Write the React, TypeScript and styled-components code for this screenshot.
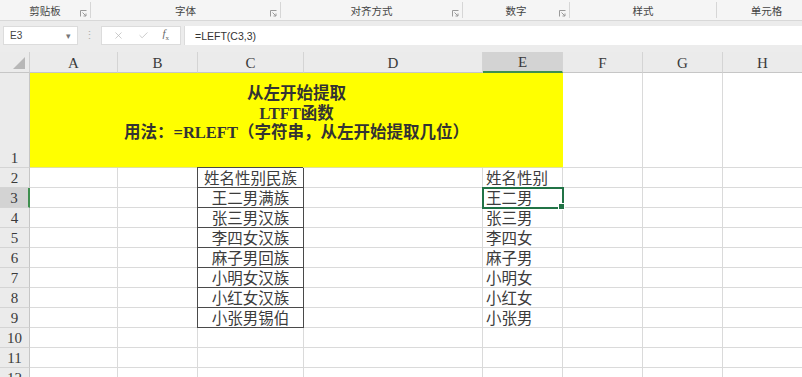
import styled, { createGlobalStyle } from 'styled-components';
import { X, Check } from 'lucide-react';

const GlobalStyle = createGlobalStyle`
  html, body {
    margin: 0;
    padding: 0;
    width: 802px;
    height: 377px;
    overflow: hidden;
    background: #ffffff;
    font-family: "Liberation Sans", "Noto Sans CJK SC", sans-serif;
  }
`;

const groups = [
  { label: '剪贴板', width: 91, launcher: true },
  { label: '字体', width: 190, launcher: true },
  { label: '对齐方式', width: 182, launcher: true },
  { label: '数字', width: 107, launcher: true },
  { label: '样式', width: 147, launcher: false },
  { label: '单元格', width: 100, launcher: false },
];

const columns = ['A', 'B', 'C', 'D', 'E', 'F', 'G', 'H'];

const nameList = ['姓名性别民族', '王二男满族', '张三男汉族', '李四女汉族', '麻子男回族', '小明女汉族', '小红女汉族', '小张男锡伯'];
const shortList = ['姓名性别', '王二男', '张三男', '李四女', '麻子男', '小明女', '小红女', '小张男'];

const Launcher = () => (
  <svg width="7" height="7" viewBox="0 0 7 7">
    <path d="M0.5 6.5V0.5H6.5" fill="none" stroke="#9a9a9a" strokeWidth="1" />
    <path d="M2.5 2.5L6 6M6 3.5V6H3.5" fill="none" stroke="#9a9a9a" strokeWidth="1" />
  </svg>
);

export default function App() {
  const rows = Array.from({ length: 11 }, (_, i) => i + 2);

  return (
    <Page>
      <GlobalStyle />
      <Ribbon>
        {groups.map((g) => (
          <Group key={g.label} $width={g.width}>
            <GroupLabel>{g.label}</GroupLabel>
            {g.launcher && (
              <LauncherSlot>
                <Launcher />
              </LauncherSlot>
            )}
          </Group>
        ))}
      </Ribbon>

      <FormulaBar>
        <NameBox>
          <span>E3</span>
          <Caret>▾</Caret>
        </NameBox>
        <Dots>⋮</Dots>
        <ActionBox>
          <X size={11} color="#b4b4b4" strokeWidth={1.5} />
          <Check size={11} color="#b4b4b4" strokeWidth={1.5} />
          <Fx>
            <i>f</i>
            <sub>x</sub>
          </Fx>
        </ActionBox>
        <FormulaInput>=LEFT(C3,3)</FormulaInput>
      </FormulaBar>

      <Sheet>
        <Corner>
          <svg width="12" height="12" viewBox="0 0 12 12">
            <path d="M12 0V12H0Z" fill="#b7b7b7" />
          </svg>
        </Corner>
        {columns.map((c) => (
          <ColHeader key={c} $active={c === 'E'}>
            {c}
          </ColHeader>
        ))}

        <RowHeader $tall>1</RowHeader>
        <TitleCell>
          <div>从左开始提取</div>
          <div>LTFT函数</div>
          <div>用法：=RLEFT（字符串，从左开始提取几位）</div>
        </TitleCell>
        <Cell />
        <Cell />
        <Cell />

        {rows.map((r) => {
          const idx = r - 2;
          const inTable = idx < nameList.length;
          return [
            <RowHeader key={`h${r}`} $active={r === 3}>
              {r}
            </RowHeader>,
            <Cell key={`a${r}`} />,
            <Cell key={`b${r}`} />,
            <Cell key={`c${r}`} $boxed={inTable} $boxTop={r === 2} $align="center">
              {inTable ? nameList[idx] : ''}
            </Cell>,
            <Cell key={`d${r}`} />,
            <Cell key={`e${r}`} $selected={r === 3}>
              {inTable ? shortList[idx] : ''}
            </Cell>,
            <Cell key={`f${r}`} />,
            <Cell key={`g${r}`} />,
            <Cell key={`h${r}`} />,
          ];
        })}
      </Sheet>
    </Page>
  );
}

// Styles
const Page = styled.div`
  width: 802px;
  height: 377px;
  overflow: hidden;
  background: #ececec;
`;

const Ribbon = styled.div`
  display: flex;
  height: 20px;
  background: #f5f5f5;
  border-bottom: 1px solid #d8d8d8;
`;

const Group = styled.div<{ $width: number }>`
  position: relative;
  flex: 0 0 ${({ $width }) => $width}px;
  display: flex;
  align-items: center;
  justify-content: center;
  border-right: 1px solid #d6d6d6;
  box-sizing: border-box;
  height: 16px;
  margin-top: 2px;
`;

const GroupLabel = styled.span`
  font-size: 10.5px;
  color: #444;
  margin-top: 1px;
`;

const LauncherSlot = styled.span`
  position: absolute;
  right: 3px;
  bottom: 1px;
  display: flex;
`;

const FormulaBar = styled.div`
  display: flex;
  align-items: center;
  height: 19px;
  padding: 5px 0 7px 3px;
  background: #ececec;
`;

const NameBox = styled.div`
  width: 75px;
  height: 19px;
  box-sizing: border-box;
  background: #fff;
  border: 1px solid #dcdcdc;
  display: flex;
  align-items: center;
  justify-content: space-between;
  padding: 0 6px 0 6px;
  font-size: 10px;
  color: #444;
`;

const Caret = styled.span`
  font-size: 9px;
  color: #777;
`;

const Dots = styled.span`
  width: 23px;
  text-align: center;
  color: #b0b0b0;
  font-size: 11px;
`;

const ActionBox = styled.div`
  width: 80px;
  height: 19px;
  box-sizing: border-box;
  background: #fff;
  border: 1px solid #dcdcdc;
  display: flex;
  align-items: center;
  justify-content: space-around;
  padding: 0 4px;
`;

const Fx = styled.span`
  font-family: "Liberation Serif", serif;
  font-size: 11px;
  color: #666;
  line-height: 1;
  sub {
    font-size: 7px;
  }
`;

const FormulaInput = styled.div`
  flex: 1;
  height: 19px;
  margin-left: 3px;
  background: #fff;
  border-left: 1px solid #dcdcdc;
  display: flex;
  align-items: center;
  padding-left: 10px;
  font-size: 10.5px;
  color: #333;
`;

const Sheet = styled.div`
  display: grid;
  grid-template-columns: 30px 88px 80px 106px 179px 80px 80px 80px 80px;
  grid-template-rows: 21px 95px repeat(11, 20px);
  background: #fff;
  font-family: "Liberation Serif", "Noto Sans CJK SC", serif;
`;

const Corner = styled.div`
  background: #ebebeb;
  border-right: 1px solid #d0d0d0;
  border-bottom: 1px solid #c6c6c6;
  display: flex;
  align-items: flex-end;
  justify-content: flex-end;
  padding: 0 4px 3px 0;
`;

const ColHeader = styled.div<{ $active?: boolean }>`
  background: ${({ $active }) => ($active ? '#d3d3d3' : '#ebebeb')};
  border-right: 1px solid #d4d4d4;
  border-bottom: ${({ $active }) => ($active ? '2px solid #3f8f4f' : '1px solid #c6c6c6')};
  display: flex;
  align-items: center;
  justify-content: center;
  font-size: 15px;
  color: #3a3a3a;
  padding-top: 2px;
`;

const RowHeader = styled.div<{ $active?: boolean; $tall?: boolean }>`
  background: ${({ $active }) => ($active ? '#d3d3d3' : '#ebebeb')};
  border-bottom: 1px solid #d4d4d4;
  border-right: ${({ $active }) => ($active ? '2px solid #3f8f4f' : '1px solid #c6c6c6')};
  display: flex;
  align-items: ${({ $tall }) => ($tall ? 'flex-end' : 'center')};
  justify-content: center;
  font-size: 15px;
  color: #3a3a3a;
  line-height: 18px;
`;

const TitleCell = styled.div`
  grid-column: 2 / 7;
  background: #ffff00;
  border-bottom: 1px solid #e0e0a0;
  display: flex;
  flex-direction: column;
  align-items: center;
  padding-top: 11px;
  font-family: "Liberation Serif", "Noto Sans CJK SC", serif;
  font-weight: 700;
  font-size: 16.5px;
  line-height: 19.5px;
  color: #333;
`;

const Cell = styled.div<{ $boxed?: boolean; $boxTop?: boolean; $align?: 'left' | 'center'; $selected?: boolean }>`
  position: relative;
  border-right: 1px solid ${({ $boxed }) => ($boxed ? '#4a4a4a' : '#dadada')};
  border-bottom: 1px solid ${({ $boxed }) => ($boxed ? '#4a4a4a' : '#dadada')};
  box-shadow: ${({ $boxed, $boxTop }) =>
    $boxed ? ($boxTop ? '-1px 0 0 #4a4a4a, -1px -1px 0 #4a4a4a' : '-1px 0 0 #4a4a4a') : 'none'};
  font-family: "Noto Sans CJK SC", sans-serif;
  font-size: 15.5px;
  line-height: 19px;
  color: #3c3c3c;
  text-align: ${({ $align }) => $align || 'left'};
  padding-left: ${({ $align }) => ($align === 'center' ? '0' : '3px')};
  white-space: nowrap;
  outline: ${({ $selected }) => ($selected ? '2px solid #217346' : 'none')};
  outline-offset: -1px;
  z-index: ${({ $selected }) => ($selected ? 1 : 0)};

  &::after {
    content: '';
    display: ${({ $selected }) => ($selected ? 'block' : 'none')};
    position: absolute;
    right: -3px;
    bottom: -3px;
    width: 5px;
    height: 5px;
    background: #217346;
    border: 1px solid #fff;
  }
`;
